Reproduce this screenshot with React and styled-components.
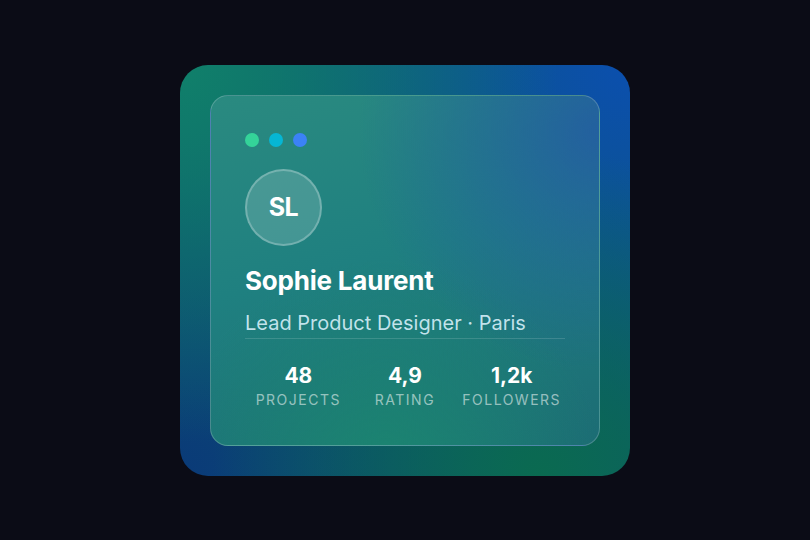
import React from "react";
import styled, { createGlobalStyle } from "styled-components";

const GlobalStyle = createGlobalStyle`
  html, body {
    margin: 0;
    padding: 0;
    background: #0b0c16;
    font-family: Inter, "Noto Sans", sans-serif;
  }
`;

const Page = styled.div`
  width: 100vw;
  height: 100vh;
  display: flex;
  align-items: center;
  justify-content: center;
`;

const Backdrop = styled.div`
  width: 450px;
  height: 411px;
  box-sizing: border-box;
  padding: 30px;
  border-radius: 28px;
  background:
    radial-gradient(circle at 0% 0%, #10806a 0%, rgba(16, 128, 106, 0) 62%),
    radial-gradient(circle at 80% 100%, #0a6a50 0%, rgba(10, 106, 80, 0) 60%),
    radial-gradient(circle at 100% 0%, #0b4fae 0%, rgba(11, 79, 174, 0) 62%),
    radial-gradient(circle at 0% 100%, #0a3a78 0%, rgba(10, 58, 120, 0) 55%),
    #0d5870;
`;

const Card = styled.div`
  height: 100%;
  box-sizing: border-box;
  padding: 37px 34px 34px;
  border-radius: 18px;
  border: 1px solid rgba(255, 255, 255, 0.2);
  background:
    radial-gradient(circle at 100% 10%, #23609f 0%, rgba(35, 96, 159, 0) 48%),
    radial-gradient(circle at 45% 110%, #1b8670 0%, rgba(27, 134, 112, 0) 50%),
    linear-gradient(165deg, #2a8a80 0%, #1f8080 45%, #1c6c74 100%);
  display: flex;
  flex-direction: column;
  color: #ffffff;
`;

const Dots = styled.div`
  display: flex;
  gap: 10px;
`;

const Dot = styled.span`
  width: 14px;
  height: 14px;
  border-radius: 50%;
  background: ${(p) => p.color};
`;

const Avatar = styled.div`
  margin-top: 22px;
  width: 77px;
  height: 77px;
  box-sizing: border-box;
  border-radius: 50%;
  border: 2px solid rgba(255, 255, 255, 0.25);
  background: rgba(255, 255, 255, 0.16);
  display: flex;
  align-items: center;
  justify-content: center;
  font-size: 25px;
  font-weight: 700;
  letter-spacing: -0.5px;
`;

const Name = styled.h1`
  margin: 19px 0 0;
  font-size: 26px;
  line-height: 32px;
  font-weight: 700;
  letter-spacing: -0.2px;
`;

const Role = styled.p`
  margin: 14px 0 0;
  padding-bottom: 3px;
  font-size: 20px;
  line-height: 24px;
  color: rgba(218, 242, 252, 0.88);
  border-bottom: 1px solid rgba(255, 255, 255, 0.14);
`;

const Stats = styled.div`
  margin-top: 25px;
  display: grid;
  grid-template-columns: repeat(3, 1fr);
`;

const Stat = styled.div`
  display: flex;
  flex-direction: column;
  align-items: center;
`;

const Value = styled.span`
  font-size: 21px;
  line-height: 24px;
  font-weight: 700;
`;

const Label = styled.span`
  margin-top: 3px;
  font-size: 14px;
  line-height: 18px;
  letter-spacing: 1.5px;
  text-transform: uppercase;
  color: rgba(255, 255, 255, 0.55);
`;

const stats = [
  { value: "48", label: "Projects" },
  { value: "4,9", label: "Rating" },
  { value: "1,2k", label: "Followers" },
];

export default function App() {
  return (
    <Page>
      <GlobalStyle />
      <Backdrop>
        <Card>
          <Dots>
            <Dot color="#34d399" />
            <Dot color="#06b6d4" />
            <Dot color="#3b82f6" />
          </Dots>
          <Avatar>SL</Avatar>
          <Name>Sophie Laurent</Name>
          <Role>Lead Product Designer · Paris</Role>
          <Stats>
            {stats.map((s) => (
              <Stat key={s.label}>
                <Value>{s.value}</Value>
                <Label>{s.label}</Label>
              </Stat>
            ))}
          </Stats>
        </Card>
      </Backdrop>
    </Page>
  );
}
